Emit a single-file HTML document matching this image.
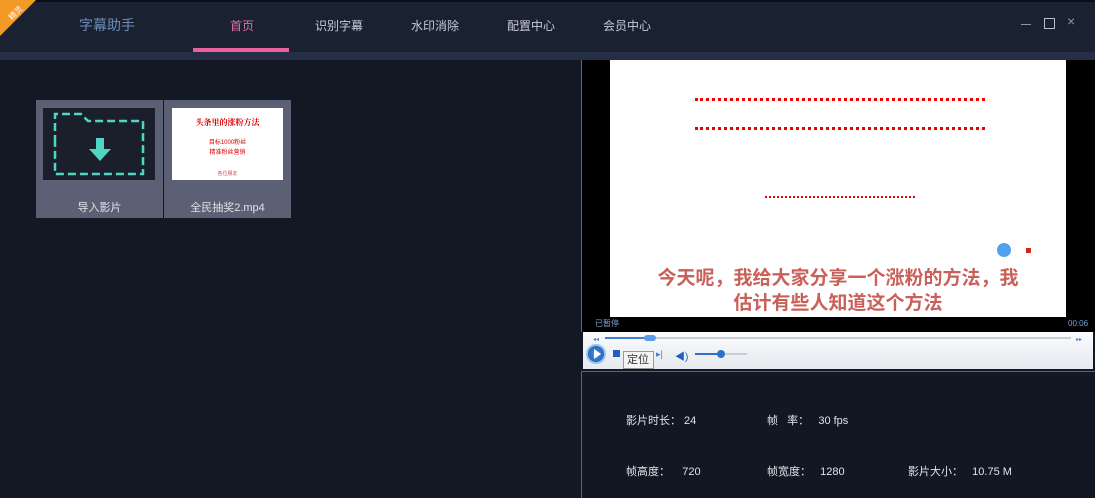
<!DOCTYPE html>
<html><head><meta charset="utf-8"><style>
*{margin:0;padding:0;box-sizing:border-box}
body{width:1095px;height:498px;overflow:hidden;background:#131924;font-family:"Liberation Sans","Noto Sans CJK SC",sans-serif;position:relative}
.a{position:absolute}
.top{left:0;top:0;width:1095px;height:52px;background:#1a2131;border-top:2px solid #0b0e14}
.strip{left:0;top:52px;width:1095px;height:8px;background:#262e45}
.nav{top:17px;font-size:12px;color:#c5cad4}
.lbl{font-size:11px;color:#e0e3e8}
</style></head><body>
<div class="a top"></div>
<div class="a strip"></div>
<svg class="a" style="left:0;top:0" width="36" height="36"><polygon points="0,0 36,0 0,36" fill="#f39a26"/><text x="6" y="18" font-size="8" fill="#fff" transform="rotate(-45 12 12)" font-family="Noto Sans CJK SC">精灵</text></svg>
<div class="a" style="left:79px;top:15px;font-size:14px;color:#6e8bb5">字幕助手</div>
<div class="a nav" style="left:230px;color:#e070a8">首页</div>
<div class="a" style="left:193px;top:48px;width:96px;height:4px;background:#e8609f"></div>
<div class="a nav" style="left:315px">识别字幕</div>
<div class="a nav" style="left:411px">水印消除</div>
<div class="a nav" style="left:507px">配置中心</div>
<div class="a nav" style="left:603px">会员中心</div>
<div class="a" style="left:1021px;top:24px;width:10px;height:1px;background:#8a93a6"></div>
<div class="a" style="left:1044px;top:18px;width:11px;height:11px;border:1px solid #b8bfcc"></div>
<div class="a" style="left:1067px;top:13px;font-size:14px;color:#8a93a6">×</div>

<div class="a" style="left:36px;top:100px;width:127px;height:118px;background:#5b6075"></div>
<div class="a" style="left:43px;top:108px;width:112px;height:72px;background:#1a1f2b"></div>
<svg class="a" style="left:43px;top:108px" width="112" height="72"><path d="M12 35 V6 H38 L45 13 H100 V66 H12 Z" fill="none" stroke="#4fd6c4" stroke-width="2.5" stroke-dasharray="8 4"/><path d="M53 30 H61 V41 H68 L57 53 L46 41 H53 Z" fill="#4fd6c4"/></svg>
<div class="a lbl" style="left:36px;top:199px;width:127px;text-align:center">导入影片</div>
<div class="a" style="left:164px;top:100px;width:127px;height:118px;background:#5b6075"></div>
<div class="a" style="left:172px;top:108px;width:111px;height:72px;background:#fff"></div>
<div class="a" style="left:172px;top:117px;width:111px;text-align:center;font-size:8px;color:#d00;font-weight:bold;font-family:'Noto Serif CJK SC',serif">头条里的涨粉方法</div>
<div class="a" style="left:172px;top:138px;width:111px;text-align:center;font-size:6px;color:#d00;line-height:10px">目标1000粉丝<br>精准粉丝营销</div>
<div class="a" style="left:172px;top:170px;width:111px;text-align:center;font-size:5px;color:#c55">各位朋友</div>
<div class="a lbl" style="left:164px;top:199px;width:127px;text-align:center">全民抽奖2.mp4</div>

<div class="a" style="left:581px;top:60px;width:514px;height:272px;background:#000;border-left:1px solid #2d6ec0"></div>
<div class="a" style="left:610px;top:60px;width:456px;height:257px;background:#fff"></div>
<div class="a" style="left:695px;top:98px;width:290px;height:2px;border-top:3px dotted #e00"></div>
<div class="a" style="left:695px;top:127px;width:290px;height:2px;border-top:3px dotted #e00"></div>
<div class="a" style="left:765px;top:196px;width:150px;border-top:2px dotted #e00"></div>
<div class="a" style="left:997px;top:243px;width:14px;height:14px;border-radius:50%;background:#4da3f0"></div>
<div class="a" style="left:1026px;top:248px;width:5px;height:5px;background:#d22"></div>
<div class="a" style="left:610px;top:266px;width:456px;text-align:center;font-size:19px;font-weight:bold;color:#c9605a;line-height:25px">今天呢，我给大家分享一个涨粉的方法，我<br>估计有些人知道这个方法</div>
<div class="a" style="left:595px;top:318px;font-size:8px;color:#7f9fd6">已暂停</div>
<div class="a" style="left:1068px;top:319px;font-size:8px;color:#7f9fd6">00:06</div>
<div class="a" style="left:583px;top:332px;width:510px;height:37px;background:linear-gradient(#fafbfd,#e6e9ee)"></div>
<div class="a" style="left:605px;top:337px;width:466px;height:2px;background:#c8cdd6"></div>
<div class="a" style="left:605px;top:337px;width:45px;height:2px;background:#3b7fd6"></div>
<div class="a" style="left:644px;top:335px;width:12px;height:6px;border-radius:3px;background:#5b9be6"></div>
<div class="a" style="left:593px;top:336px;font-size:6px;color:#3b7fd6">◂◂</div>
<div class="a" style="left:1076px;top:336px;font-size:6px;color:#3b7fd6">▸▸</div>
<div class="a" style="left:586px;top:344px;width:20px;height:20px;border-radius:50%;background:radial-gradient(#4b98ec,#1a4fa3);border:2px solid #9bc3f0"></div>
<div class="a" style="left:594px;top:349px;width:0;height:0;border-left:7px solid #fff;border-top:5px solid transparent;border-bottom:5px solid transparent"></div>
<div class="a" style="left:613px;top:350px;width:7px;height:7px;background:#1f5fc0"></div>
<div class="a" style="left:656px;top:349px;font-size:9px;color:#3b7fd6">▸|</div>
<div class="a" style="left:675px;top:348px;font-size:10px;color:#1f5fc0">◀)</div>
<div class="a" style="left:695px;top:353px;width:52px;height:2px;background:#c8cdd6"></div>
<div class="a" style="left:695px;top:353px;width:26px;height:2px;background:#2f6fcf"></div>
<div class="a" style="left:717px;top:350px;width:8px;height:8px;border-radius:50%;background:#2f6fcf"></div>
<div class="a" style="left:623px;top:351px;width:31px;height:18px;background:#f4f4f4;border:1px solid #999;font-size:11px;color:#333;padding:1px 3px;line-height:14px">定位</div>
<div class="a" style="left:581px;top:371px;width:514px;height:127px;background:#111824;border-left:1px solid #2d6ec0;border-top:1px solid #2d6ec0"></div>
<div class="a lbl" style="left:626px;top:412px">影片时长：&nbsp;24</div>
<div class="a lbl" style="left:767px;top:412px">帧&nbsp;&nbsp;&nbsp;率：&nbsp;&nbsp;&nbsp;30 fps</div>
<div class="a lbl" style="left:626px;top:463px">帧高度：&nbsp;&nbsp;&nbsp;&nbsp;720</div>
<div class="a lbl" style="left:767px;top:463px">帧宽度：&nbsp;&nbsp;&nbsp;1280</div>
<div class="a lbl" style="left:908px;top:463px">影片大小：&nbsp;&nbsp;&nbsp;10.75 M</div>
</body></html>
